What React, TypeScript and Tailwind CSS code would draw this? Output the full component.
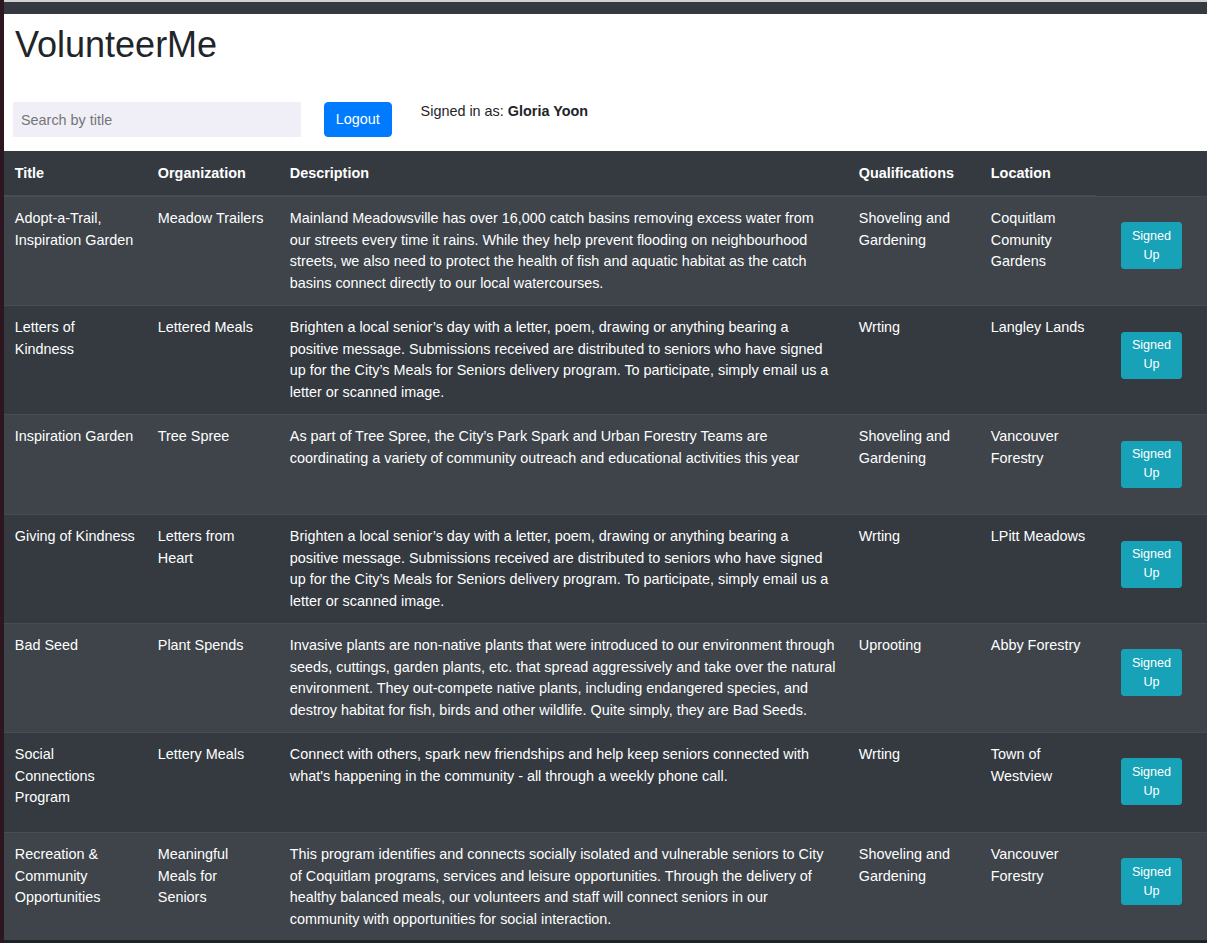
const rows = [
  {
    title: 'Adopt-a-Trail, Inspiration Garden',
    org: 'Meadow Trailers',
    desc: 'Mainland Meadowsville has over 16,000 catch basins removing excess water from our streets every time it rains. While they help prevent flooding on neighbourhood streets, we also need to protect the health of fish and aquatic habitat as the catch basins connect directly to our local watercourses.',
    qual: 'Shoveling and Gardening',
    loc: 'Coquitlam Comunity Gardens',
  },
  {
    title: 'Letters of Kindness',
    org: 'Lettered Meals',
    desc: 'Brighten a local senior’s day with a letter, poem, drawing or anything bearing a positive message. Submissions received are distributed to seniors who have signed up for the City’s Meals for Seniors delivery program. To participate, simply email us a letter or scanned image.',
    qual: 'Wrting',
    loc: 'Langley Lands',
  },
  {
    title: 'Inspiration Garden',
    org: 'Tree Spree',
    desc: 'As part of Tree Spree, the City’s Park Spark and Urban Forestry Teams are coordinating a variety of community outreach and educational activities this year',
    qual: 'Shoveling and Gardening',
    loc: 'Vancouver Forestry',
  },
  {
    title: 'Giving of Kindness',
    org: 'Letters from Heart',
    desc: 'Brighten a local senior’s day with a letter, poem, drawing or anything bearing a positive message. Submissions received are distributed to seniors who have signed up for the City’s Meals for Seniors delivery program. To participate, simply email us a letter or scanned image.',
    qual: 'Wrting',
    loc: 'LPitt Meadows',
  },
  {
    title: 'Bad Seed',
    org: 'Plant Spends',
    desc: 'Invasive plants are non-native plants that were introduced to our environment through seeds, cuttings, garden plants, etc. that spread aggressively and take over the natural environment. They out-compete native plants, including endangered species, and destroy habitat for fish, birds and other wildlife. Quite simply, they are Bad Seeds.',
    qual: 'Uprooting',
    loc: 'Abby Forestry',
  },
  {
    title: 'Social Connections Program',
    org: 'Lettery Meals',
    desc: "Connect with others, spark new friendships and help keep seniors connected with what's happening in the community - all through a weekly phone call.",
    qual: 'Wrting',
    loc: 'Town of Westview',
  },
  {
    title: 'Recreation & Community Opportunities',
    org: 'Meaningful Meals for Seniors',
    desc: 'This program identifies and connects socially isolated and vulnerable seniors to City of Coquitlam programs, services and leisure opportunities. Through the delivery of healthy balanced meals, our volunteers and staff will connect seniors in our community with opportunities for social interaction.',
    qual: 'Shoveling and Gardening',
    loc: 'Vancouver Forestry',
  },
]

const th = 'px-[10.8px] pt-[11.6px] pb-[11px] text-left font-bold border-b-2 border-[#454d55] align-bottom'
const td = 'px-[10.8px] py-[10.8px] align-top border-t border-[#454d55]'

function App() {
  return (
    <div className="flex h-screen overflow-hidden font-['Liberation_Sans',Arial,sans-serif] text-[14.4px] leading-[21.6px]">
      <div className="w-[4px] shrink-0 bg-[#2c1721]" />
      <div className="flex min-w-0 flex-1 flex-col">
        <div className="h-[2px] bg-[#d2d2d2]" />
        <div className="h-[12px] bg-[#343a40]" />

        <header className="bg-white pt-[9px] pb-[14px]">
          <h1 className="pl-[11px] text-[36px] leading-[43.2px] font-medium text-[#212529]">VolunteerMe</h1>
          <div className="mt-[36px] flex items-start pl-[9px]">
            <input
              type="text"
              placeholder="Search by title"
              className="h-[35px] w-[288px] bg-[#f0eff8] px-[8px] text-[14.4px] text-[#495057] outline-none placeholder:text-[#757575]"
            />
            <button className="ml-[23px] h-[35px] rounded-[4px] border border-[#007bff] bg-[#007bff] px-[10.8px] text-white">
              Logout
            </button>
            <p className="ml-[29px] -mt-[1px] text-[#212529]">
              Signed in as: <span className="font-bold">Gloria Yoon</span>
            </p>
          </div>
        </header>

        <div className="flex-1 overflow-hidden bg-[#343a40] text-white">
          <table className="w-full table-fixed border-collapse">
            <colgroup>
              <col className="w-[143px]" />
              <col className="w-[132px]" />
              <col className="w-[569px]" />
              <col className="w-[132px]" />
              <col className="w-[116px]" />
              <col className="w-[111px]" />
            </colgroup>
            <thead>
              <tr>
                <th className={th}>Title</th>
                <th className={th}>Organization</th>
                <th className={th}>Description</th>
                <th className={th}>Qualifications</th>
                <th className={th}>Location</th>
                <th className="p-0" />
              </tr>
            </thead>
            <tbody>
              {rows.map((r, i) => (
                <tr key={i} className="odd:bg-[#3e444a]">
                  <td className={td}>{r.title}</td>
                  <td className={td}>{r.org}</td>
                  <td className={td}>{r.desc}</td>
                  <td className={td}>{r.qual}</td>
                  <td className={td}>{r.loc}</td>
                  <td className={td}>
                    <div className="px-[14.4px] pt-[14.4px] pb-[16px]">
                      <button className="block w-full rounded-[3px] border border-[#17a2b8] bg-[#17a2b8] px-[7.2px] py-[3.6px] text-center text-[12.6px] leading-[18.9px] text-white">
                        Signed Up
                      </button>
                    </div>
                  </td>
                </tr>
              ))}
            </tbody>
          </table>
        </div>

        <div className="h-[3px] bg-[#1e2126]" />
      </div>
    </div>
  )
}

export default App
